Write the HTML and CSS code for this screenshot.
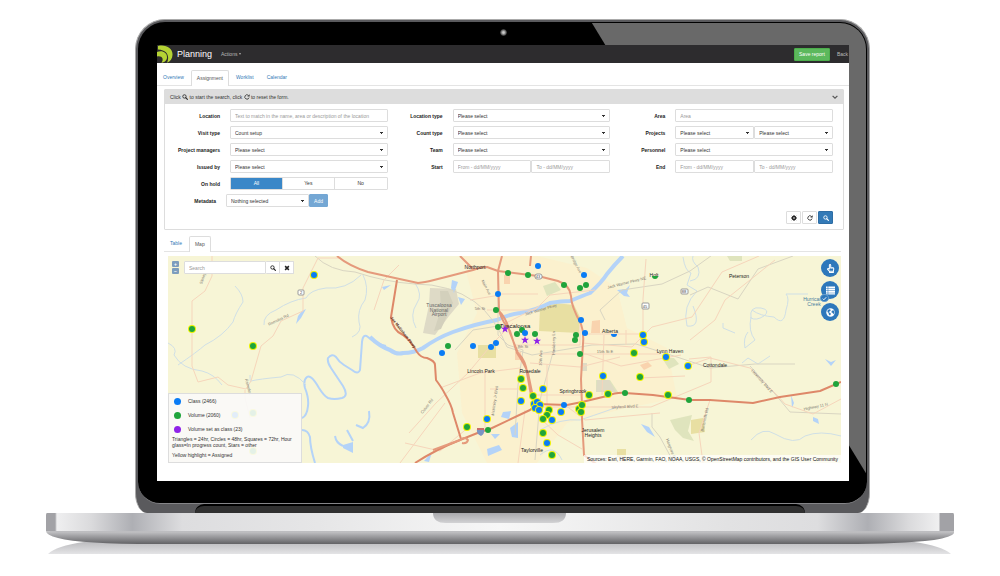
FILE: index.html
```html
<!DOCTYPE html>
<html lang="en">
<head>
    <meta charset="UTF-8">
    <title>Planning</title>
    <link rel="stylesheet" href="styles.css">
</head>
<body>
    <!-- Shared icons -->
    <svg class="sprite" aria-hidden="true">
        <symbol id="icon-search" viewBox="0 0 16 16"><circle cx="6.5" cy="6.5" r="4.5" fill="none" stroke="currentColor" stroke-width="2.4"/><path d="M10 10l4.5 4.5" stroke="currentColor" stroke-width="3" stroke-linecap="round"/></symbol>
        <symbol id="icon-refresh" viewBox="0 0 16 16"><path d="M13.5 9.5A5.8 5.8 0 1 1 12 3.8" fill="none" stroke="currentColor" stroke-width="2.2"/><path d="M15 .5v6.2H8.8z" fill="currentColor"/></symbol>
        <symbol id="icon-cog" viewBox="0 0 16 16"><circle cx="8" cy="8" r="4" fill="none" stroke="currentColor" stroke-width="3.6"/><path d="M8 0v3M8 13v3M0 8h3M13 8h3M2.3 2.3l2.2 2.2M11.5 11.5l2.2 2.2M2.3 13.7l2.2-2.2M11.5 4.5l2.2-2.2" stroke="currentColor" stroke-width="2.6"/></symbol>
        <symbol id="icon-times" viewBox="0 0 16 16"><path d="M3 3l10 10M13 3L3 13" stroke="currentColor" stroke-width="4"/></symbol>
        <symbol id="icon-hand" viewBox="0 0 16 16"><path d="M6 9V2.2a1.2 1.2 0 0 1 2.4 0V6l4 .8q1.600.4 1.400 2l-.7 3.700V15H6.300v-2L2.800 9.500Q2.300 8 3.800 8zM8.400 6v2M10.500 6.500v2M6.300 12.700h6.500" fill="none" stroke="currentColor" stroke-width="1.8" stroke-linejoin="round"/></symbol>
        <symbol id="icon-list" viewBox="0 0 16 16"><path d="M0 1h3v3H0zM4 1h12v3H4zM0 5h3v3H0zM4 5h12v3H4zM0 9h3v3H0zM4 9h12v3H4zM0 13h3v2H0zM4 13h12v2H4z" fill="currentColor"/></symbol>
        <symbol id="icon-globe" viewBox="0 0 16 16"><circle cx="8" cy="8" r="7.500" fill="currentColor"/><path d="M3 3.500l3.500-1.500 2 1.500-1 2-2 1 .5 2 2 .5.500 2-1.500 2.500-2-2-.5-3L2.500 7zM10.500 5l3-1 1.500 4-2 3-1.500-2.500-2-1z" fill="#2e78bb"/></symbol>
        <symbol id="icon-check" viewBox="0 0 16 16"><path d="M2.500 8.500l3.500 3.500 7.500-8" fill="none" stroke="currentColor" stroke-width="3"/></symbol>
    </svg>

    <div class="laptop">
        <div class="lid">
            <div class="bezel">
                <span class="camera"></span>
                <main class="screen">
                    <header class="navbar">
                        <svg class="logo" viewBox="0 0 16 17" fill="#b5d334">
                            <path d="M1 .5C9-1.500 16 3 15.500 9.500C15.300 13 13.500 16 10 17.300C12.500 12 11.500 4.500 1 4z"/>
                            <path d="M0 6.500C5 4.500 10.300 7 10 12C9.800 14.500 8.500 16.500 4.500 17.300C7 14 5.500 10 0 11z"/>
                        </svg>
                        <span class="brand">Planning</span>
                        <button class="nav-menu" type="button">Actions <span class="caret"></span></button>
                        <button class="save" type="button">Save report</button>
                        <a class="back" href="#">Back</a>
                    </header>

                    <nav class="tabs">
                        <a href="#">Overview</a>
                        <a class="active" href="#">Assignment</a>
                        <a href="#">Worklist</a>
                        <a href="#">Calendar</a>
                    </nav>

                    <form class="panel">
                        <div class="panel-heading">
                            <span>Click <svg class="icon"><use href="#icon-search"/></svg> to start the search, click <svg class="icon"><use href="#icon-refresh"/></svg> to reset the form.</span>
                            <svg class="chevron" viewBox="0 0 10 10"><path d="M1 3l4 4 4-4" fill="none" stroke="#555" stroke-width="2"/></svg>
                        </div>
                        <div class="filters">
                            <div class="field">
                                <label for="location">Location</label>
                                <input id="location" type="text" placeholder="Text to match in the name, area or description of the location">
                            </div>
                            <div class="field">
                                <label for="locationType">Location type</label>
                                <select id="locationType"><option>Please select</option></select>
                            </div>
                            <div class="field">
                                <label for="area">Area</label>
                                <input id="area" type="text" placeholder="Area">
                            </div>
                            <div class="field">
                                <label for="visitType">Visit type</label>
                                <select id="visitType"><option>Count setup</option></select>
                            </div>
                            <div class="field">
                                <label for="countType">Count type</label>
                                <select id="countType"><option>Please select</option></select>
                            </div>
                            <div class="field">
                                <label for="projects">Projects</label>
                                <div class="pair">
                                    <select id="projects"><option>Please select</option></select>
                                    <select aria-label="Project phase"><option>Please select</option></select>
                                </div>
                            </div>
                            <div class="field">
                                <label for="managers">Project managers</label>
                                <select id="managers"><option>Please select</option></select>
                            </div>
                            <div class="field">
                                <label for="team">Team</label>
                                <select id="team"><option>Please select</option></select>
                            </div>
                            <div class="field">
                                <label for="personnel">Personnel</label>
                                <select id="personnel"><option>Please select</option></select>
                            </div>
                            <div class="field">
                                <label for="issuedBy">Issued by</label>
                                <select id="issuedBy"><option>Please select</option></select>
                            </div>
                            <div class="field">
                                <label for="startFrom">Start</label>
                                <div class="pair">
                                    <input id="startFrom" type="text" placeholder="From - dd/MM/yyyy">
                                    <input type="text" placeholder="To - dd/MM/yyyy" aria-label="Start to">
                                </div>
                            </div>
                            <div class="field">
                                <label for="endFrom">End</label>
                                <div class="pair">
                                    <input id="endFrom" type="text" placeholder="From - dd/MM/yyyy">
                                    <input type="text" placeholder="To - dd/MM/yyyy" aria-label="End to">
                                </div>
                            </div>
                            <div class="field first-column" role="radiogroup" aria-labelledby="holdLabel">
                                <span class="label" id="holdLabel">On hold</span>
                                <div class="toggle">
                                    <label><input type="radio" name="hold" checked><span>All</span></label>
                                    <label><input type="radio" name="hold"><span>Yes</span></label>
                                    <label><input type="radio" name="hold"><span>No</span></label>
                                </div>
                            </div>
                            <div class="field metadata first-column">
                                <label for="metadata">Metadata</label>
                                <div class="add-group">
                                    <select id="metadata"><option>Nothing selected</option></select>
                                    <button class="add" type="button">Add</button>
                                </div>
                            </div>
                        </div>
                        <div class="actions">
                            <button type="button" aria-label="Settings"><svg class="icon"><use href="#icon-cog"/></svg></button>
                            <button type="reset" aria-label="Reset"><svg class="icon"><use href="#icon-refresh"/></svg></button>
                            <button class="primary" type="button" aria-label="Search"><svg class="icon"><use href="#icon-search"/></svg></button>
                        </div>
                    </form>

                    <nav class="tabs result-tabs">
                        <a href="#">Table</a>
                        <a class="active" href="#">Map</a>
                    </nav>

                    <section class="map">
                        <svg class="map-canvas" viewBox="168 256 673 207" preserveAspectRatio="xMidYMid slice">
                            <defs>
                                <path id="star" d="M0-4L1-1.200H4L1.600.6 2.500 3.500 0 1.700-2.500 3.500-1.600.6-4-1.200H-1z"/>
                            </defs>
                            <path fill="#f7f5d6" d="M168 256h673v207H168z"/>

                            <!-- Built-up areas and parks -->
                            <g class="city">
                                <path d="M462 256h75l50 12 30 20 10 40 40 20 10 50-50 10-60 15-30 40h-50l-25-50-5-60 20-40z"/>
                            </g>
                            <path fill="#dedac6" d="M430 288l26 1 3 15-10 12-14 19-12-2 6-28z"/>
                            <path fill="#d3d0bc" d="M440 291h8l5 12-12 26-7 2 7-22z"/>
                            <g fill="#e8dfa2">
                                <path d="M540 308l15-5 19 2 6 12-1 16-20-1-20-1z"/>
                                <path d="M478 345h18v13h-18zM617 449h9v8h-9zM691 420l12-2 2 14-14 2z"/>
                            </g>
                            <g fill="#dfe4bd">
                                <path d="M543 286l12-4 6 8-14 6zM670 420l22-5-4 16 6 10-11-3-8-8zM727 256h15v5h-12z"/>
                                <path d="M596 380h14l8 12h-22zM662 358h12l5 6-10 5z"/>
                            </g>
                            <g fill="#f9d3ae">
                                <path d="M592 321l8-1v13h-9zM640 365l8-3 4 4-8 4zM504 275h6v9h-6zM515 352h6v8h-6z"/>
                            </g>
                            <path fill="#dfdbc4" d="M597 380h12l7 12h-20zM582 363h5v8h-5z"/>

                            <!-- Water -->
                            <g class="water">
                                <path class="river" d="M370 337q9 9 20 13 7 5 13 3 11 0 20-5 14-10 30-16 22-8 44-12 13-6 23-7 16-3 30-10 12-2 20-2 12-5 20-8 12-11 17-19 8-10 16-18"/>
                                <path class="bend" d="M386 346q-10-2-18-9-5-4-6 5l-2 28q-2 5-8 0l-8-5q-5-3-8-8-4-4-8 1-1 4 3 10l12 18q6 10-1 12-8 2-14 0-4-2-9-10-8-14-12-11-4 3-2 11 4 10 3 18-1 10-6 12M302 430q6 0 8 7 0 10 5 26"/>
                                <path class="bend" d="M369 411q2 12-6 17l-7-3M347 430l6 11M335 436q1 7 8 10"/>
                                <path class="lake" d="M306 309l-5 9-5 6 2-8 4-5zM343 445l10-3v11l-10-5zM382 287l9-2-7 5zM452 280l6 2-4 11-3-5zM458 297l7 2-4 6zM503 412l8-1-2 8-8-2zM510 428l8-6v16l-6-1zM491 434h9l-5 5zM487 449l12-4 3 5-14 6zM617 290l9-1 4-4-3 8 3 4-6-1zM641 424l8 3 6 10-8-5zM825 359l6 3 5-2-5 6zM813 417l5 2 1 5-6-3zM791 395l3 8-2 5zM424 461l8-9-3 10z"/>
                                <g class="stream">
                                    <path d="M235 286q8 8 8 16-8 12-10 20-10 14-28 23-8 7-27 20M168 343q10 5 6 12 8 14 28 16 12 3 20 14M264 325q-1-10 12-15 15-10 30-12 4-8 20-10 20 2 35-13M363 275q6 12 2 25-8 10-6 22 4 10-7 15M250 375q0 8 1 6 8-2 30-4 12-8 25 8M415 283q8 12 2 20-8 12-1 25M690 281q12-2 8-14-7-6-5-11M735 333l-12-5v-5M751 317q-3 14 4 23l-10 8q-2-10 3-16M751 318q-2-12 10-10 10 2 3 8-8 5-13 2M752 310q8 6 22 7 10 10 12-7 4-12 0-16h22M751 440q12-14 24-6 20 12 30 2 15-6 36 0M742 363l6-5 10 6 12-8"/>
                                    <path d="M683 257q2 14 8 16l-4 12 10 6q-15 15-10 35 15 2 6-20M540 430q20-12 40-10 30-10 40-14M540 455q14-12 22 5"/>
                                </g>
                            </g>

                            <!-- Railways and county roads -->
                            <g class="rail">
                                <path d="M315 256q15 15 40 16 30 10 60 12 35 0 60 18 20 15 32 45l25 8 60-10 44-1 44 14 30 10 45-4 40 0M605 320l-5-10 22-20 40-6 28-13 25-18h40"/>
                                <path d="M498 275v60l10 10 15 5-5 35-3 50M455 350l18-20 25-4M555 345l-15 55-5 60M690 295l18-8 30 12 20-30 35-13M750 366l25 28 15 18 51 2M652 413v14l8 10 14 26"/>
                            </g>
                            <g class="minor">
                                <path d="M212 256v20l-7 15-13 10v65l6 16 20-5 10 8 18 4 5-8 10-35 12-10 8-15 22-10V288l15-30h23M245 390v8l5 20M374 310l10-30 15-15"/>
                                <path d="M405 443l35 8 30-25M409 433l27-30 32-30 25-30 20-20M400 463l45-60M440 388l40-15 40-5"/>
                                <path d="M498 294h40M487 310h48l15-15 45-5M470 300l30-5M498 327l40-20M515 345h65v-20M530 363l50 4 40-10M540 354h46l35 12 60-11M583 334h60v-35l3-40M604 335l-2 60M580 354h80M582 343l50 4 20-20 40-10 30-45 37-16M490 389h40M485 430v-60M547 365v40M530 395h53"/>
                                <path d="M541 407h110l60-25v-25l-22 2M540 418l18 17 24 14M565 405l20 15 75-7M690 365l20-7 40 10 28 28 7 8 28 10 28-15M703 463l-4-30 11-33M690 340l25-20 10-20 50-40M640 378l45-2M626 330v15M525 410l-7 53"/>
                            </g>

                            <!-- Highways -->
                            <g class="major">
                                <path d="M337 256q12 10 31 16l27 6q14 3 23 5 8-1 12-2 20-5 43-11 8-3 14-3l11 4 40 5 20 5q12 4 13 15 0 10 10 28 3 8 2 20l-2 35 1 27v13l2 36q8 7 21 14"/>
                                <path d="M460 256l13 13M498 271l1 40q4 12 11 20l7 22q8 12 11 20l5 24 2 10M499 311q8 8 11 22l8 20q8 8 9 20l4 22"/>
                                <path class="wide" d="M397 280l-6 37q2 14 12 18 8 6 14 17 4 6 10 6 8 3 8 7l1 15q6 8 9 14 7 12 8 19l8 26"/>
                                <path d="M531 256l-1 10M502 256l-4 15"/>
                                <path class="wide" d="M415 463q20-13 45-23l20-8 10-3 40-19 7-6 30 1 15-3 25-6q10-4 18-3l28 2 37 5 20 0 43 3 27-6 40-6 21-9"/>
                                <path d="M433 450l27-10q5-4 8 0-1 4-6 3"/>
                            </g>

                            <!-- Place names -->
                            <g class="place">
                                <text x="475" y="269">Northport</text>
                                <text x="515" y="328" class="main">Tuscaloosa</text>
                                <text x="481" y="373">Lincoln Park</text>
                                <text x="530" y="373">Rosedale</text>
                                <text x="532" y="452">Taylorville</text>
                                <text x="610" y="333">Alberta</text>
                                <text x="654" y="277">Holt</text>
                                <text x="670" y="353">Lynn Haven</text>
                                <text x="715" y="367">Cottondale</text>
                                <text x="739" y="278">Peterson</text>
                                <text x="593" y="432">Jerusalem</text>
                                <text x="593" y="437">Heights</text>
                                <text x="573" y="393">Springbrook</text>
                                <g class="airport">
                                    <text x="439" y="307">Tuscaloosa</text>
                                    <text x="439" y="312">National</text>
                                    <text x="439" y="316">Airport</text>
                                </g>
                                <g class="creek">
                                    <text x="814" y="301">Hurricane</text>
                                    <text x="814" y="306">Creek</text>
                                </g>
                            </g>
                            <g class="road-name">
                                <text transform="translate(279 321) rotate(-26)">Romulus Rd</text>
                                <text transform="translate(205 276) rotate(-70)">Sipsey Rd</text>
                                <text transform="translate(247 387) rotate(76)">Romulus</text>
                                <text transform="translate(428 407) rotate(-52)">Culver Rd</text>
                                <text transform="translate(485 288) rotate(62)">Main Ave</text>
                                <text transform="translate(480 310)">5th St</text>
                                <text transform="translate(523 348)">8th St</text>
                                <text transform="translate(496 401) rotate(-82)">McKinley Jr Blvd</text>
                                <text transform="translate(542 358) rotate(-88)">10th Ave</text>
                                <text transform="translate(555 343) rotate(-90)">Hackberry Ln</text>
                                <text transform="translate(541 311) rotate(-16)">Jack Warner Pkwy</text>
                                <text transform="translate(627 284) rotate(-14)">Jack Warner Pkwy NE</text>
                                <text transform="translate(575 265) rotate(62)">Bridge Ave</text>
                                <text transform="translate(605 353)">15th St E</text>
                                <text transform="translate(625 408) rotate(-3)">Skyland Blvd E</text>
                                <text transform="translate(670 450) rotate(70)">Hargrove Rd</text>
                                <text transform="translate(706 420) rotate(-78)">Buttermilk Rd</text>
                                <text transform="translate(761 382) rotate(48)">University Blvd E</text>
                                <text transform="translate(816 408) rotate(-12)">Highway 11 N</text>
                                <text class="parkway" transform="translate(402 333) rotate(52)">Joe Mallisham Pkwy</text>
                            </g>
                            <g class="shield">
                                <rect x="298" y="290" width="6" height="5" rx="1"/><text x="301" y="294">2</text>
                                <rect x="535" y="274" width="7" height="5" rx="2"/><text x="538" y="278">43</text>
                                <rect x="642" y="303" width="7" height="6" rx="1"/><text x="645" y="308">45</text>
                                <rect x="681" y="289" width="7" height="5" rx="1"/><text x="684" y="293">88</text>
                                <path fill="#7a94c4" d="M477 429h7q1 5-3 7-5-2-4-7z"/><path fill="#c86d6d" d="M477 428h7v2h-7z"/>
                            </g>

                            <!-- Count locations -->
                            <g class="marker volume">
                                <circle cx="508" cy="273" r="3"/><circle cx="528" cy="275" r="3"/><circle cx="496" cy="310" r="3"/><circle cx="498" cy="327" r="3"/>
                                <circle cx="517" cy="334" r="3"/><circle cx="522" cy="330" r="3"/><circle cx="535" cy="334" r="3"/><circle cx="448" cy="346" r="3"/>
                                <circle cx="564" cy="285" r="3"/><circle cx="586" cy="285" r="3"/><circle cx="580" cy="288" r="3"/><circle cx="576" cy="335" r="3"/>
                                <circle cx="575" cy="340" r="3"/><circle cx="580" cy="354" r="3"/><circle cx="625" cy="393" r="3"/><circle cx="689" cy="400" r="3"/>
                                <circle cx="836" cy="384" r="3"/><circle cx="488" cy="430" r="3"/><path d="M652 276h6a3 3 0 0 1-6 0z"/>
                            </g>
                            <g class="marker class">
                                <circle cx="538" cy="266" r="3"/><circle cx="498" cy="294" r="3"/><circle cx="525" cy="333" r="3"/><circle cx="442" cy="353" r="3"/>
                                <circle cx="473" cy="346" r="3"/><circle cx="491" cy="347" r="3"/><circle cx="496" cy="343" r="3"/><circle cx="584" cy="275" r="3"/>
                                <circle cx="581" cy="320" r="3"/><circle cx="585" cy="333" r="3"/><circle cx="564" cy="405" r="3"/><path d="M611 334h6a3 3 0 0 1-6 0z"/>
                            </g>
                            <g class="marker volume assigned">
                                <circle cx="192" cy="329" r="3"/><circle cx="253" cy="346" r="3"/><circle cx="253" cy="413" r="3"/><circle cx="253" cy="451" r="3"/>
                                <circle cx="521" cy="379" r="3"/><circle cx="523" cy="388" r="3"/><circle cx="533" cy="396" r="3"/><circle cx="549" cy="410" r="3"/>
                                <circle cx="547" cy="415" r="3"/><circle cx="543" cy="419" r="3"/><circle cx="543" cy="433" r="3"/><circle cx="552" cy="455" r="3"/>
                                <circle cx="467" cy="427" r="3"/><circle cx="634" cy="353" r="3"/><circle cx="640" cy="377" r="3"/><circle cx="608" cy="394" r="3"/>
                                <circle cx="589" cy="395" r="3"/><circle cx="668" cy="395" r="3"/><circle cx="579" cy="409" r="3"/><circle cx="582" cy="405" r="3"/>
                                <circle cx="581" cy="412" r="3"/>
                            </g>
                            <g class="marker class assigned">
                                <circle cx="314" cy="275" r="3"/><circle cx="235" cy="415" r="3"/><circle cx="543" cy="389" r="3"/><circle cx="521" cy="401" r="3"/>
                                <circle cx="534" cy="404" r="3"/><circle cx="537" cy="402" r="3"/><circle cx="540" cy="405" r="3"/><circle cx="535" cy="408" r="3"/>
                                <circle cx="539" cy="410" r="3"/><circle cx="547" cy="443" r="3"/><circle cx="487" cy="419" r="3"/><circle cx="643" cy="335" r="3"/>
                                <circle cx="644" cy="342" r="3"/><circle cx="666" cy="357" r="3"/><circle cx="688" cy="366" r="3"/><circle cx="603" cy="376" r="3"/>
                                <circle cx="561" cy="412" r="3"/><circle cx="552" cy="420" r="3"/>
                            </g>
                            <g fill="#8f22e8">
                                <use href="#star" x="505" y="329"/><use href="#star" x="525" y="340"/><use href="#star" x="537" y="341"/>
                            </g>
                        </svg>

                        <div class="map-search">
                            <div class="zoom">
                                <button type="button">+</button>
                                <button type="button">−</button>
                            </div>
                            <input type="text" placeholder="Search" aria-label="Search the map">
                            <button type="button" aria-label="Find"><svg class="icon"><use href="#icon-search"/></svg></button>
                            <button type="button" aria-label="Clear"><svg class="icon"><use href="#icon-times"/></svg></button>
                        </div>

                        <div class="map-tools">
                            <button type="button" aria-label="Select"><svg><use href="#icon-hand"/></svg></button>
                            <button type="button" aria-label="Layers"><svg><use href="#icon-list"/></svg><span class="badge"><svg><use href="#icon-check"/></svg></span></button>
                            <button type="button" aria-label="Base map"><svg><use href="#icon-globe"/></svg></button>
                        </div>

                        <div class="legend">
                            <ul>
                                <li class="class">Class (2466)</li>
                                <li class="volume">Volume (2060)</li>
                                <li class="both">Volume set as class (23)</li>
                            </ul>
                            <p>Triangles = 24hr, Circles = 48hr, Squares = 72hr, Hour glass=In progress count, Stars = other</p>
                            <p>Yellow highlight = Assigned</p>
                        </div>

                        <div class="attribution">Sources: Esri, HERE, Garmin, FAO, NOAA, USGS, © OpenStreetMap contributors, and the GIS User Community</div>
                    </section>
                </main>
            </div>
            <div class="hinge"></div>
        </div>

        <svg class="base" viewBox="0 0 908 42" preserveAspectRatio="none" aria-hidden="true">
            <defs>
                <linearGradient id="deck">
                    <stop offset="0" stop-color="#a2a2a6"/>
                    <stop offset=".01" stop-color="#a2a2a6"/>
                    <stop offset=".012" stop-color="#efeff0"/>
                    <stop offset=".05" stop-color="#dadadc"/>
                    <stop offset=".095" stop-color="#aeafb4"/>
                    <stop offset=".15" stop-color="#dddddf"/>
                    <stop offset=".3" stop-color="#e6e6e7"/>
                    <stop offset=".5" stop-color="#f7f7f7"/>
                    <stop offset=".75" stop-color="#e2e2e3"/>
                    <stop offset=".85" stop-color="#dddddf"/>
                    <stop offset=".905" stop-color="#aeafb4"/>
                    <stop offset=".95" stop-color="#dadadc"/>
                    <stop offset=".983" stop-color="#efeff0"/>
                    <stop offset=".985" stop-color="#a2a2a6"/>
                </linearGradient>
                <linearGradient id="underside" x2="0" y2="1">
                    <stop offset="0" stop-color="#d0d0d2"/>
                    <stop offset=".35" stop-color="#a9a9ac"/>
                    <stop offset="1" stop-color="#626265"/>
                </linearGradient>
                <linearGradient id="shadow" x2="0" y2="1">
                    <stop offset="0" stop-color="#bcbcbf"/>
                    <stop offset="1" stop-color="#e4e4e6"/>
                </linearGradient>
                <linearGradient id="notch" x2="0" y2="1">
                    <stop offset="0" stop-color="#a9a9ac"/>
                    <stop offset="1" stop-color="#d2d2d4"/>
                </linearGradient>
            </defs>
            <path fill="url(#shadow)" d="M2 41q8-8 36-12h830q28 4 37 12z"/>
            <path fill="url(#underside)" d="M0 17h908v3q-2 4-20 7-35 4-90 4H110q-75 0-98-6Q0 22 0 18z"/>
            <path fill="url(#deck)" d="M1 0h906q1 0 1 2v16H0V2q0-2 1-2z"/>
            <path fill="#bdbdc0" d="M4 18h900v1H4z"/>
            <path fill="url(#notch)" d="M387 0h133q0 10-13 10H400q-13 0-13-10z"/>
        </svg>
    </div>
</body>
</html>
```

FILE: styles.css
```css
* {
    box-sizing: border-box;
}

body {
    margin: 0;
    background: #fff;
    color: #333;
    font-family: "Liberation Sans", Arial, sans-serif;
    font-size: 5px;
    line-height: 6px;
}

button,
input,
select {
    font: inherit;
    margin: 0;
    border-radius: 1px;
}

button {
    display: flex;
    align-items: center;
    justify-content: center;
    padding: 0;
    background: #fff;
    border: 1px solid #ddd;
    color: #222;
    cursor: pointer;
}

a {
    color: #337ab7;
    text-decoration: none;
}

.sprite {
    display: none;
}

.icon {
    width: 6px;
    height: 6px;
    vertical-align: -1px;
}

/* Laptop */
.laptop {
    padding: 19px 46px;
}

.lid {
    margin: 0 84px 0 89px;
    padding: 2px 2px 0;
    background: #5a5a5d;
    border: 1px solid #aaa;
    border-bottom: 0;
    border-radius: 30px 30px 12px 12px / 30px 30px 20px 20px;
    overflow: hidden;
}

.bezel {
    position: relative;
    padding: 23px 18px 22px 19px;
    background: #000;
    border-bottom: 1px solid #858588;
    border-radius: 27px 27px 22px 22px;
}

.bezel::before {
    content: "";
    position: absolute;
    inset: 1px;
    background: #696969;
    border-radius: 26px 26px 20px 20px;
    clip-path: polygon(62.3% 0, 100% 0, 100% 94%);
}

.camera {
    position: absolute;
    top: 7px;
    left: 50%;
    width: 7px;
    height: 7px;
    margin-left: -3px;
    border-radius: 50%;
    background: radial-gradient(circle, #ccc 15%, #666 50%, #111 75%);
}

.screen {
    position: relative;
    padding-bottom: 18px;
    background: #fff;
}

.hinge {
    height: 9px;
    margin: 0 62px 0 57px;
    background: #303030;
    border-top: 2px solid #000;
    border-radius: 9px 9px 0 0;
}

.base {
    display: block;
    width: 100%;
    height: 42px;
}

/* Top bar */
.navbar {
    display: flex;
    align-items: center;
    height: 18px;
    background: #2d2c2e;
    color: #aaa;
}

.logo {
    width: 16px;
    height: 18px;
}

.brand {
    margin-left: 4px;
    color: #fff;
    font-size: 9px;
}

.nav-menu {
    margin-left: 9px;
    background: none;
    border: 0;
    color: #bbb;
    gap: 2px;
}

.caret {
    border: 1px solid transparent;
    border-top: 2px solid #aaa;
    border-bottom: 0;
}

.save {
    height: 13px;
    margin-left: auto;
    padding: 0 4px;
    background: #5cb85c;
    border-color: #4cae4c;
    color: #fff;
}

.back {
    margin: 0 1px 0 7px;
    color: #bbb;
}

/* Tabs */
.tabs {
    display: flex;
    align-items: flex-end;
    gap: 1px;
    height: 23px;
    border-bottom: 1px solid #e4e4e4;
}

.tabs a {
    padding: 4px 5px 5px;
    border: 1px solid transparent;
    border-bottom: 0;
    border-radius: 2px 2px 0 0;
}

.tabs .active {
    margin-bottom: -1px;
    background: #fff;
    border-color: #ddd;
    color: #555;
}

.result-tabs {
    height: 22px;
    margin: 0 8px 4px 7px;
}

/* Search form */
.panel {
    margin: 3px 5px 0 7px;
    border: 1px solid #ddd;
    border-radius: 1px;
}

.panel-heading {
    display: flex;
    align-items: center;
    justify-content: space-between;
    height: 14px;
    padding: 0 5px;
    background: #ddd;
}

.chevron {
    width: 6px;
    height: 6px;
}

.filters {
    display: grid;
    grid-template-columns: repeat(3, 1fr);
    row-gap: 4px;
    padding: 5px 10px 0 0;
}

.field {
    display: grid;
    grid-template-columns: 55px 1fr;
    column-gap: 10px;
    align-items: center;
    height: 13px;
}

.field > label,
.field > .label {
    color: #222;
    font-weight: bold;
    text-align: right;
    white-space: nowrap;
}

.first-column {
    grid-column: 1;
}

input,
select {
    width: 100%;
    min-width: 0;
    height: 13px;
    padding: 0 4px;
    background: #fff;
    border: 1px solid #ddd;
    color: #333;
}

input::placeholder {
    color: #999;
    opacity: 1;
}

select {
    appearance: none;
    background-image: linear-gradient(#333, #333), linear-gradient(#333, #333);
    background-position: right 4px top 5px, right 5px top 6px;
    background-size: 3px 1px, 1px 1px;
    background-repeat: no-repeat;
}

.pair {
    display: grid;
    grid-template-columns: 1fr 1fr;
}

.toggle {
    display: grid;
    grid-template-columns: repeat(3, 1fr);
    height: 13px;
    border: 1px solid #ddd;
    border-radius: 1px;
    text-align: center;
}

.toggle input {
    position: absolute;
    width: 1px;
    height: 1px;
    opacity: 0;
}

.toggle span {
    display: block;
    height: 100%;
    line-height: 11px;
    border-right: 1px solid #ddd;
}

.toggle label:last-child span {
    border-right: 0;
}

.toggle :checked + span {
    background: #3a87c8;
    color: #fff;
}

.metadata {
    grid-template-columns: 51px 102px;
}

.add-group {
    display: flex;
}

.add {
    flex: none;
    width: 19px;
    background: #74a7d4;
    border-color: #74a7d4;
    color: #fff;
}

.actions {
    display: flex;
    justify-content: flex-end;
    gap: 1px;
    padding: 4px 10px 5px;
}

.actions button {
    width: 15px;
    height: 13px;
}

.actions .primary {
    background: #337ab7;
    border-color: #2e6da4;
    color: #fff;
}

/* Map */
.map {
    position: relative;
    height: 207px;
    margin: 0 8px 0 11px;
    overflow: hidden;
}

.map-canvas {
    display: block;
    width: 100%;
    height: 100%;
}

.city {
    fill: #fbf1ce;
}

.water path {
    fill: none;
    stroke: #b4d3f8;
}

.water .river {
    stroke-width: 4;
}

.water .bend {
    stroke-width: 2;
}

.water .lake {
    fill: #b4d3f8;
    stroke: none;
}

.water .stream path {
    stroke: #cfdfe6;
    stroke-width: 1;
}

.rail {
    fill: none;
    stroke: #d9d5c2;
}

.minor {
    fill: none;
    stroke: #f6d5bb;
}

.major {
    fill: none;
    stroke: #e59a7c;
    stroke-width: 2;
    stroke-linejoin: round;
}

.major .wide {
    stroke: #de8869;
}

.place {
    fill: #222;
    font-size: 5px;
    text-anchor: middle;
}

.place .main {
    font-size: 6px;
    fill: #111;
}

.airport {
    fill: #666;
}

.creek {
    fill: #4a7f9f;
}

.road-name {
    fill: #7d7870;
    font-size: 4px;
    text-anchor: middle;
}

.parkway {
    fill: #5b2d1c;
    font-weight: bold;
}

.shield rect {
    fill: #fff;
    stroke: #999;
}

.shield text {
    fill: #444;
    font-size: 4px;
    text-anchor: middle;
}

.marker.class {
    fill: #0a7cf5;
}

.marker.volume {
    fill: #20a43c;
}

.assigned {
    stroke: #ecf200;
    stroke-width: 2px;
    paint-order: stroke;
}

.map-search {
    position: absolute;
    top: 5px;
    left: 4px;
    display: flex;
    width: 122px;
}

.map-search button {
    flex: none;
    width: 14px;
    border-left: 0;
}

.map-search input {
    height: 13px;
}

.zoom {
    display: grid;
    gap: 1px;
    margin-right: 5px;
}

.map-search .zoom button {
    width: 7px;
    height: 6px;
    background: #7d9dbd;
    border: 0;
    color: #fff;
    font-weight: bold;
}

.map-tools {
    position: absolute;
    top: 3px;
    right: 2px;
    display: grid;
    gap: 4px;
}

.map-tools button {
    position: relative;
    width: 18px;
    height: 18px;
    background: #2e78bb;
    border: 0;
    border-radius: 50%;
    color: #fff;
}

.map-tools svg {
    width: 9px;
    height: 9px;
}

.map-tools .badge {
    position: absolute;
    bottom: -3px;
    left: -1px;
    display: flex;
    align-items: center;
    justify-content: center;
    width: 9px;
    height: 8px;
    background: #2e78bb;
    border: 1px solid #6ba0ce;
    border-radius: 50%;
}

.map-tools .badge svg {
    width: 5px;
    height: 5px;
}

.legend {
    position: absolute;
    bottom: 0;
    left: 0;
    width: 134px;
    padding: 0 3px;
    background: rgba(250, 250, 250, 0.9);
    border: 1px solid #ddd;
}

.legend ul {
    margin: 0;
    padding: 0;
    list-style: none;
}

.legend li {
    display: flex;
    align-items: center;
    gap: 7px;
    height: 14px;
}

.legend li::before {
    content: "";
    width: 7px;
    height: 7px;
    margin-left: 2px;
    border-radius: 50%;
    background: #0a7cf5;
}

.legend .volume::before {
    background: #20a43c;
}

.legend .both::before {
    background: #8f22e8;
}

.legend p {
    margin: 0 0 4px;
}

.attribution {
    position: absolute;
    right: 0;
    bottom: 0;
    padding: 1px 3px;
    background: rgba(255, 255, 255, 0.7);
    color: #111;
}
```
